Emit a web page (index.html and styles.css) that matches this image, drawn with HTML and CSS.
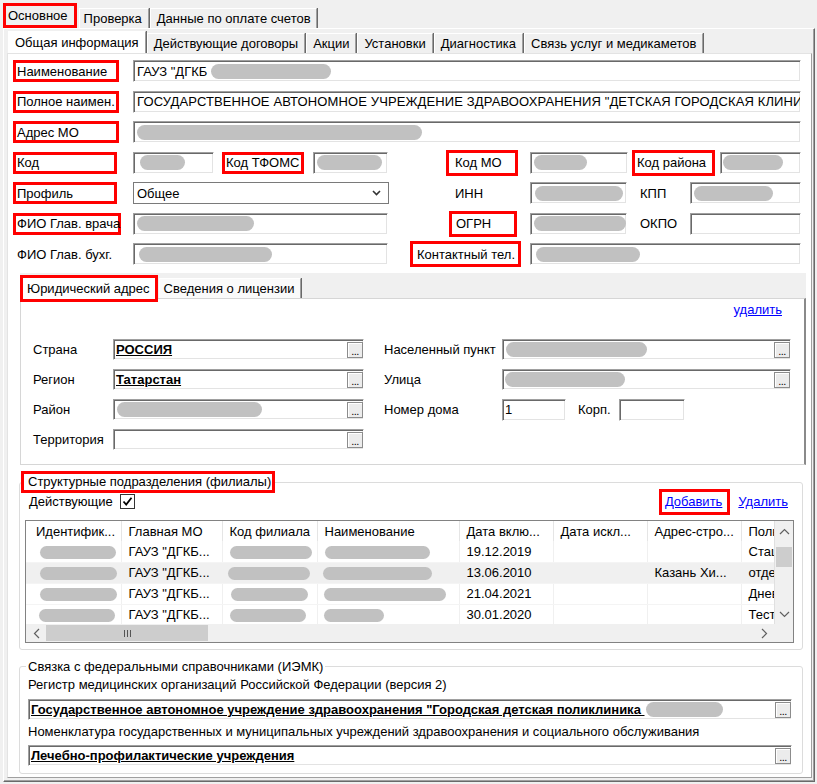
FILE: index.html
```html
<!DOCTYPE html>
<html lang="ru">
<head>
<meta charset="utf-8">
<title>Основное</title>
<link rel="stylesheet" href="styles.css">
</head>
<body>
<div class="window">
  <nav class="tabs tabs-main">
    <div class="tab tab-hl">Основное</div>
    <div class="tab">Проверка</div>
    <div class="tab">Данные по оплате счетов</div>
  </nav>
  <div class="page-outer">
    <nav class="tabs tabs-info">
      <div class="tab tab-cur">Общая информация</div>
      <div class="tab">Действующие договоры</div>
      <div class="tab">Акции</div>
      <div class="tab">Установки</div>
      <div class="tab">Диагностика</div>
      <div class="tab">Связь услуг и медикаметов</div>
    </nav>
    <div class="page-inner">
      <div class="form">
        <div class="row">
          <div class="lbl hl w106">Наименование</div>
          <div class="tb ml14 w668">ГАУЗ "ДГКБ&nbsp;<span class="pill" style="width:120px"></span></div>
        </div>
        <div class="row">
          <div class="lbl hl w106">Полное наимен.</div>
          <div class="tb ml14 w668 caps">ГОСУДАРСТВЕННОЕ АВТОНОМНОЕ УЧРЕЖДЕНИЕ ЗДРАВООХРАНЕНИЯ "ДЕТСКАЯ ГОРОДСКАЯ КЛИНИЧЕСКАЯ БОЛЬНИЦА"</div>
        </div>
        <div class="row">
          <div class="lbl hl w106">Адрес МО</div>
          <div class="tb ml14 w668"><span class="pill" style="width:285px"></span></div>
        </div>
        <div class="row">
          <div class="lbl hl w104">Код</div>
          <div class="tb ml16 w81"><span class="pill" style="width:45px;margin-left:3px"></span></div>
          <div class="lbl hl ml8 w82">Код ТФОМС</div>
          <div class="tb ml9 w75"><span class="pill" style="width:65px"></span></div>
          <div class="lbl hl tall ml58 w72 pl6">Код МО</div>
          <div class="tb ml12 w98"><span class="pill" style="width:53px"></span></div>
          <div class="lbl hl tall ml4 w83 pl2">Код района</div>
          <div class="tb ml5 w81"><span class="pill" style="width:60px;margin-left:-1px"></span></div>
        </div>
        <div class="row">
          <div class="lbl hl w104">Профиль</div>
          <div class="tb select ml16 w256">Общее
            <svg class="chev" width="9" height="6" viewBox="0 0 9 6"><polyline points="1,1 4.5,4.5 8,1" fill="none" stroke="#333" stroke-width="1.6"/></svg>
          </div>
          <div class="lbl ml62 w79">ИНН</div>
          <div class="tb w97"><span class="pill" style="width:88px;margin-left:1px"></span></div>
          <div class="lbl ml9 w54">КПП</div>
          <div class="tb w111"><span class="pill" style="width:79px"></span></div>
        </div>
        <div class="row">
          <div class="lbl hl w108">ФИО Глав. врача</div>
          <div class="tb ml12 w255"><span class="pill" style="width:117px"></span></div>
          <div class="lbl hl tall ml61 w68 pl4">ОГРН</div>
          <div class="tb ml13 w97"><span class="pill" style="width:92px"></span></div>
          <div class="lbl ml9 w54">ОКПО</div>
          <div class="tb w111"></div>
        </div>
        <div class="row">
          <div class="lbl w120">ФИО Глав. бухг.</div>
          <div class="tb w255"><span class="pill" style="width:133px;margin-left:2px"></span></div>
          <div class="lbl hl tall ml22 w111 pl4">Контактный тел.</div>
          <div class="tb ml9 w271"><span class="pill" style="width:104px;margin-left:2px"></span></div>
        </div>
      </div>

      <div class="addr-tabs">
        <div class="tab tab-hl tab-sub">Юридический адрес</div>
        <div class="tab">Сведения о лицензии</div>
      </div>
      <div class="addr-panel">
        <div class="link-row"><a class="link">удалить</a></div>
        <div class="addr-grid">
          <div class="alb">Страна</div>
          <div class="tb"><span class="val">РОССИЯ</span><span class="dots">...</span></div>
          <div class="alb ar">Населенный пункт</div>
          <div class="tb"><span class="pill" style="width:141px;margin-left:1px"></span><span class="dots">...</span></div>

          <div class="alb">Регион</div>
          <div class="tb"><span class="val">Татарстан</span><span class="dots">...</span></div>
          <div class="alb ar">Улица</div>
          <div class="tb"><span class="pill" style="width:120px"></span><span class="dots">...</span></div>

          <div class="alb">Район</div>
          <div class="tb"><span class="pill" style="width:145px;margin-left:1px"></span><span class="dots">...</span></div>
          <div class="alb ar">Номер дома</div>
          <div class="house">
            <div class="tb w64">1</div>
            <div class="alb korp">Корп.</div>
            <div class="tb w66"></div>
          </div>

          <div class="alb">Территория</div>
          <div class="tb"><span class="dots">...</span></div>
        </div>
      </div>

      <fieldset class="group branches">
        <legend class="legend-hl">Структурные подразделения (филиалы)</legend>
        <div class="br-top">
          <span>Действующие</span>
          <span class="check"><svg width="13" height="13" viewBox="0 0 13 13"><polyline points="2.5,6.5 5.2,9.5 10.5,2.8" fill="none" stroke="#000" stroke-width="1.8"/></svg></span>
          <a class="link link-hl">Добавить</a>
          <a class="link link-del">Удалить</a>
        </div>
        <div class="grid">
          <div class="grid-body">
            <div class="grid-view">
              <table>
                <colgroup>
                  <col class="k1"><col class="k2"><col class="k3"><col class="k4"><col class="k5"><col class="k5"><col class="k5"><col class="k8">
                </colgroup>
                <thead>
                  <tr><th>Идентифик...</th><th>Главная МО</th><th>Код филиала</th><th>Наименование</th><th>Дата вклю...</th><th>Дата искл...</th><th>Адрес-стро...</th><th>Полное наименование</th></tr>
                </thead>
                <tbody>
                  <tr>
                    <td><span class="pill sm" style="width:76px;margin-left:4px"></span></td>
                    <td>ГАУЗ "ДГКБ...</td>
                    <td><span class="pill sm" style="width:82px"></span></td>
                    <td><span class="pill sm" style="width:105px"></span></td>
                    <td>19.12.2019</td><td></td><td></td><td>Стационар</td>
                  </tr>
                  <tr class="alt">
                    <td><span class="pill sm" style="width:77px;margin-left:4px"></span></td>
                    <td>ГАУЗ "ДГКБ...</td>
                    <td><span class="pill sm" style="width:82px;margin-left:-2px"></span></td>
                    <td><span class="pill sm" style="width:109px;margin-left:-2px"></span></td>
                    <td>13.06.2010</td><td></td><td>Казань Хи...</td><td>отделение</td>
                  </tr>
                  <tr>
                    <td><span class="pill sm" style="width:77px;margin-left:4px"></span></td>
                    <td>ГАУЗ "ДГКБ...</td>
                    <td><span class="pill sm" style="width:77px;margin-left:1px"></span></td>
                    <td><span class="pill sm" style="width:122px;margin-left:-1px"></span></td>
                    <td>21.04.2021</td><td></td><td></td><td>Дневной стационар</td>
                  </tr>
                  <tr>
                    <td><span class="pill sm" style="width:76px;margin-left:3px"></span></td>
                    <td>ГАУЗ "ДГКБ...</td>
                    <td><span class="pill sm" style="width:76px"></span></td>
                    <td><span class="pill sm" style="width:60px;margin-left:-1px"></span></td>
                    <td>30.01.2020</td><td></td><td></td><td>Тестовое</td>
                  </tr>
                </tbody>
              </table>
            </div>
            <div class="vscroll">
              <div class="arrow"><svg width="11" height="7" viewBox="0 0 11 7"><polyline points="1,6 5.5,1.5 10,6" fill="none" stroke="#606060" stroke-width="1.2"/></svg></div>
              <div class="vthumb"></div>
              <div class="track"></div>
              <div class="arrow"><svg width="11" height="7" viewBox="0 0 11 7"><polyline points="1,1 5.5,5.5 10,1" fill="none" stroke="#606060" stroke-width="1.2"/></svg></div>
            </div>
          </div>
          <div class="hscroll-row">
            <div class="hscroll">
              <div class="harrow"><svg width="7" height="11" viewBox="0 0 7 11"><polyline points="6,1 1.5,5.5 6,10" fill="none" stroke="#606060" stroke-width="1.2"/></svg></div>
              <div class="hthumb"><span class="grip"></span><span class="grip"></span><span class="grip"></span></div>
              <div class="track"></div>
              <div class="harrow"><svg width="7" height="11" viewBox="0 0 7 11"><polyline points="1,1 5.5,5.5 1,10" fill="none" stroke="#606060" stroke-width="1.2"/></svg></div>
            </div>
            <div class="corner"></div>
          </div>
        </div>
      </fieldset>

      <fieldset class="group fed">
        <legend class="legend">Связка с федеральными справочниками (ИЭМК)</legend>
        <div class="caption">Регистр медицинских организаций Российской Федерации (версия 2)</div>
        <div class="tb fed-tb"><span class="val">Государственное автономное учреждение здравоохранения "Городская детская поликлиника&nbsp;</span><span class="pill" style="width:77px;margin-left:2px"></span><span class="dots">...</span></div>
        <div class="caption c2">Номенклатура государственных и муниципальных учреждений здравоохранения и социального обслуживания</div>
        <div class="tb fed-tb fed-tb2"><span class="val">Лечебно-профилактические учреждения</span><span class="dots">...</span></div>
      </fieldset>
    </div>
  </div>
</div>
</body>
</html>
```

FILE: styles.css
```css
* { box-sizing: border-box; }
html, body { margin: 0; padding: 0; }
body {
  background: #f0f0f0;
  font-family: "Liberation Sans", Arial, sans-serif;
  font-size: 13px;
  color: #000;
}
.window { width: 817px; height: 784px; overflow: hidden; background: #f0f0f0; }

/* ---------- tabs ---------- */
.tabs { display: flex; align-items: flex-end; }
.tabs-main { height: 28px; padding-left: 3px; }
.tab {
  height: 20px;
  display: flex;
  align-items: center;
  padding: 0 5px 0 5px;
  background: #f0f0f0;
  border-top: 1px solid #fff;
  border-left: 1px solid #fff;
  border-right: 1px solid #a0a0a0;
  box-shadow: 1px 0 0 #696969;
  margin-right: 1px;
  white-space: nowrap;
}
.tab-hl {
  height: 25px;
  border: 3px solid #f00;
  box-shadow: none;
  padding: 0 6px 0 2px;
  margin-right: 2px;
}
.tabs-main .tab:nth-child(2) { padding: 0 6px 0 4px; }
.tabs-main .tab:nth-child(3) { padding: 0 5px 0 6px; }

.page-outer {
  margin-left: 3px;
  width: 812px;
  height: 754px;
  border: 1px solid;
  border-color: #fff #696969 #696969 #fff;
  box-shadow: inset -1px -1px 0 #a0a0a0;
  background: #f0f0f0;
}
.tabs-info { height: 24px; padding-left: 4px; }
.tabs-info .tab { padding: 0 6px 0 6px; }
.tab-cur { height: 22px; background: #fff; padding: 0 7px 0 6px; }

.page-inner {
  margin-left: 3px;
  width: 805px;
  height: 725px;
  background: #fff;
  border: 1px solid;
  border-color: #e3e3e3 #a0a0a0 #a0a0a0 #e3e3e3;
}

/* ---------- main form ---------- */
.form { padding: 6px 0 0 5px; display: flex; flex-direction: column; gap: 8.5px; }
.row { display: flex; align-items: center; height: 22px; }
.lbl {
  display: flex; align-items: center; height: 22px;
  white-space: nowrap; padding-left: 4px; flex: none;
}
.hl { border: 3px solid #f00; padding-left: 1px; }
.tall { height: 26px; }
.pl2 { padding-left: 2px; } .pl4 { padding-left: 4px; } .pl6 { padding-left: 6px; }

.tb {
  height: 22px;
  display: flex; align-items: center;
  padding-left: 3px;
  background: #fff;
  border: 1px solid;
  border-color: #a0a0a0 #fff #fff #a0a0a0;
  box-shadow: inset 1px 1px 0 #696969, inset -1px -1px 0 #e3e3e3;
  overflow: hidden; white-space: nowrap; flex: none;
}
.caps { letter-spacing: 0.12px; }
.select {
  border: 1px solid #7a7a7a;
  box-shadow: none;
  justify-content: space-between;
  padding: 0 7px 0 3px;
}
.pill { display: inline-block; height: 15px; border-radius: 8px; background: #c1c1c1; flex: none; }
.pill.sm { height: 13px; border-radius: 7px; vertical-align: middle; }

.w64 { width: 64px; } .w66 { width: 66px; } .w68 { width: 68px; } .w72 { width: 72px; }
.w75 { width: 75px; } .w79 { width: 79px; } .w81 { width: 81px; } .w82 { width: 82px; }
.w83 { width: 83px; } .w97 { width: 97px; } .w98 { width: 98px; } .w104 { width: 104px; }
.w106 { width: 106px; } .w108 { width: 108px; } .w111 { width: 111px; } .w120 { width: 120px; }
.w255 { width: 255px; } .w256 { width: 256px; } .w271 { width: 271px; } .w668 { width: 668px; }
.w54 { width: 54px; }
.ml4 { margin-left: 4px; } .ml5 { margin-left: 5px; } .ml8 { margin-left: 8px; } .ml9 { margin-left: 9px; }
.ml12 { margin-left: 12px; } .ml13 { margin-left: 13px; } .ml14 { margin-left: 14px; } .ml16 { margin-left: 16px; }
.ml22 { margin-left: 22px; } .ml58 { margin-left: 58px; } .ml61 { margin-left: 61px; } .ml62 { margin-left: 62px; }

/* ---------- address sub-tabs ---------- */
.addr-tabs {
  margin: 8px 0 0 12px;
  width: 786px; height: 25px;
  background: #f0f0f0;
  display: flex; align-items: flex-end;
  position: relative; z-index: 1;
}
.tab-sub { height: 27px; margin-bottom: -4px; background: #fff; padding: 0 5px 0 4px; margin-right: 1px; }
.addr-tabs .tab:not(.tab-hl) { background: #fafafa; padding: 0 6px 0 4px; }

.addr-panel {
  margin-left: 12px;
  width: 786px; height: 167px;
  background: #fff;
  border: 1px solid #d6d6d6;
  border-right: 2px solid #8a8a8a;
  padding: 3px 22px 0 12px;
}
.link-row { display: flex; justify-content: flex-end; height: 16px; line-height: 16px; }
.link { color: #0000ff; text-decoration: underline; cursor: pointer; }

.addr-grid {
  margin-top: 21px;
  display: grid;
  grid-template-columns: 80px 251px 138px 289px;
  grid-auto-rows: 21px;
  row-gap: 9px;
}
.alb { display: flex; align-items: center; white-space: nowrap; }
.alb.ar { padding-left: 20px; }
.addr-grid .tb { height: 21px; padding-left: 2px; }
.val { font-weight: bold; text-decoration: underline; }
.dots {
  margin-left: auto;
  width: 16px; height: 16px; flex: none;
  border: 1px solid #8c8c8c;
  box-shadow: inset 1px 1px 0 #fff;
  background: #ececec;
  font-size: 11px; line-height: 12px;
  color: #000;
  display: flex; justify-content: center; align-items: flex-end;
  letter-spacing: -0.5px;
}
.house { display: flex; align-items: center; }
.house .tb { height: 22px; }
.korp { width: 53px; padding-left: 12px; }

/* ---------- group boxes ---------- */
.group {
  margin: 6px 0 0 11px;
  width: 784px;
  border: 1px solid #dcdcdc;
  border-radius: 3px;
  padding: 0 0 6px 0;
  min-width: 0;
}
.legend-hl {
  margin-left: 1px;
  padding: 0 1px 0 4px;
  border: 3px solid #f00;
  height: 22px;
  line-height: 16px;
  white-space: nowrap;
}
.br-top { display: flex; align-items: center; height: 17px; padding: 0 14px 0 9px; }
.check {
  margin-left: 7px;
  width: 15px; height: 15px;
  border: 1px solid #333;
  background: #fff;
  display: flex; align-items: center; justify-content: center;
}
.link-hl {
  margin-left: auto;
  border: 3px solid #f00;
  height: 26px;
  display: flex; align-items: center;
  padding: 0 5px 0 3px;
  flex: none;
}
.link-del { margin-left: 8px; }

/* ---------- data grid ---------- */
.grid {
  margin: 10px 0 0 5px;
  width: 769px;
  border: 1px solid #828282;
  background: #fff;
}
.grid-body { display: flex; height: 103px; overflow: hidden; }
.grid-view { width: 748px; overflow: hidden; flex: none; }
.grid table { border-collapse: collapse; table-layout: fixed; width: 875px; }
.k1 { width: 95px; } .k2 { width: 101px; } .k3 { width: 95px; } .k4 { width: 142px; }
.k5 { width: 94px; } .k8 { width: 160px; }
.grid th, .grid td {
  padding: 0 0 0 7px;
  text-align: left;
  font-weight: normal;
  white-space: nowrap;
  overflow: hidden;
  border-right: 1px solid #f0f0f0;
}
.grid th { height: 20px; border-right: 1px solid #e5e5e5; }
.grid td { height: 21px; border-bottom: 1px solid #f4f4f4; }
.grid th:first-child, .grid td:first-child { padding-left: 10px; }
.grid tr.alt td { background: #f0f0f0; }

.vscroll {
  width: 19px; flex: none;
  background: #f0f0f0;
  border-left: 1px solid #e0e0e0;
  display: flex; flex-direction: column;
}
.arrow { height: 20px; display: flex; align-items: center; justify-content: center; flex: none; }
.vthumb { height: 20px; margin: 6px 1px 0 1px; background: #cdcdcd; flex: none; }
.track { flex: 1; }
.hscroll-row { display: flex; height: 18px; }
.hscroll { width: 748px; display: flex; background: #f0f0f0; flex: none; }
.harrow { width: 20px; display: flex; align-items: center; justify-content: center; flex: none; }
.hthumb {
  width: 162px; margin: 1px 0;
  background: #cdcdcd;
  display: flex; align-items: center; justify-content: center; gap: 2px;
  flex: none;
}
.grip { width: 1px; height: 7px; background: #555; }
.corner { flex: 1; background: #f0f0f0; }

/* ---------- federal group ---------- */
.fed { margin-top: 9px; padding: 0 11px 7px 8px; }
.legend { margin-left: -2px; padding: 0 2px; line-height: 15px; white-space: nowrap; }
.caption { margin-top: 3px; line-height: 16px; white-space: nowrap; }
.caption.c2 { margin-top: 4px; }
.fed-tb { margin-top: 6px; height: 21px; width: 764px; padding-left: 2px; }
.fed-tb2 { margin-top: 5px; }
```
